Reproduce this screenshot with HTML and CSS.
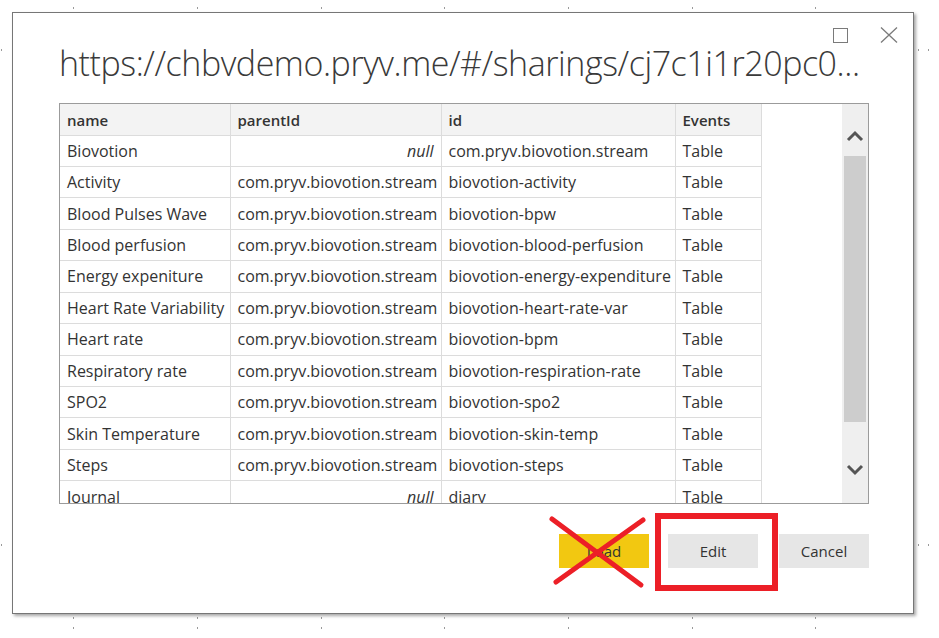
FILE: index.html
```html
<!DOCTYPE html>
<html>
<head>
<meta charset="utf-8">
<link rel="stylesheet" href="styles.css">
</head>
<body>
<div class="canvas">
  <span class="dot" style="left:73px;top:7px"></span>
  <span class="dot" style="left:197px;top:7px"></span>
  <span class="dot" style="left:321px;top:7px"></span>
  <span class="dot" style="left:444px;top:7px"></span>
  <span class="dot" style="left:568px;top:7px"></span>
  <span class="dot" style="left:692px;top:7px"></span>
  <span class="dot" style="left:815px;top:7px"></span>
  <span class="dot" style="left:73px;top:617px"></span>
  <span class="dot" style="left:197px;top:617px"></span>
  <span class="dot" style="left:321px;top:617px"></span>
  <span class="dot" style="left:444px;top:617px"></span>
  <span class="dot" style="left:568px;top:617px"></span>
  <span class="dot" style="left:692px;top:617px"></span>
  <span class="dot" style="left:815px;top:617px"></span>
  <span class="dot" style="left:73px;top:627px"></span>
  <span class="dot" style="left:197px;top:627px"></span>
  <span class="dot" style="left:321px;top:627px"></span>
  <span class="dot" style="left:444px;top:627px"></span>
  <span class="dot" style="left:568px;top:627px"></span>
  <span class="dot" style="left:692px;top:627px"></span>
  <span class="dot" style="left:815px;top:627px"></span>
  <span class="dot" style="left:1px;top:49px"></span>
  <span class="dot" style="left:1px;top:544px"></span>
  <span class="dot" style="left:918px;top:49px"></span>
  <span class="dot" style="left:928px;top:49px"></span>
  <span class="dot" style="left:918px;top:544px"></span>
  <span class="dot" style="left:928px;top:544px"></span>

  <div class="dialog">
    <div class="win-controls">
      <span class="maximize"></span>
      <svg class="close" width="18" height="16" viewBox="0 0 18 16"><path d="M1 0.5 L17 15.5 M17 0.5 L1 15.5" stroke="#7a7a7a" stroke-width="1.3" fill="none"/></svg>
    </div>
    <h1 class="title">https://chbvdemo.pryv.me/#/sharings/cj7c1i1r20pc0...</h1>
    <div class="grid-box">
      <div class="grid-view">
        <table class="grid">
          <colgroup>
            <col class="c-name"><col class="c-parent"><col class="c-id"><col class="c-events">
          </colgroup>
          <thead>
            <tr><th>name</th><th>parentId</th><th>id</th><th>Events</th></tr>
          </thead>
          <tbody>
            <tr><td>Biovotion</td><td class="null">null</td><td>com.pryv.biovotion.stream</td><td>Table</td></tr>
            <tr><td>Activity</td><td>com.pryv.biovotion.stream</td><td>biovotion-activity</td><td>Table</td></tr>
            <tr><td>Blood Pulses Wave</td><td>com.pryv.biovotion.stream</td><td>biovotion-bpw</td><td>Table</td></tr>
            <tr><td>Blood perfusion</td><td>com.pryv.biovotion.stream</td><td>biovotion-blood-perfusion</td><td>Table</td></tr>
            <tr><td>Energy expeniture</td><td>com.pryv.biovotion.stream</td><td>biovotion-energy-expenditure</td><td>Table</td></tr>
            <tr><td>Heart Rate Variability</td><td>com.pryv.biovotion.stream</td><td>biovotion-heart-rate-var</td><td>Table</td></tr>
            <tr><td>Heart rate</td><td>com.pryv.biovotion.stream</td><td>biovotion-bpm</td><td>Table</td></tr>
            <tr><td>Respiratory rate</td><td>com.pryv.biovotion.stream</td><td>biovotion-respiration-rate</td><td>Table</td></tr>
            <tr><td>SPO2</td><td>com.pryv.biovotion.stream</td><td>biovotion-spo2</td><td>Table</td></tr>
            <tr><td>Skin Temperature</td><td>com.pryv.biovotion.stream</td><td>biovotion-skin-temp</td><td>Table</td></tr>
            <tr><td>Steps</td><td>com.pryv.biovotion.stream</td><td>biovotion-steps</td><td>Table</td></tr>
            <tr><td>Journal</td><td class="null">null</td><td>diary</td><td>Table</td></tr>
          </tbody>
        </table>
      </div>
      <div class="scrollbar">
        <svg class="arrow" width="18" height="12" viewBox="0 0 18 12"><path d="M2 10 L9 3 L16 10" stroke="#555" stroke-width="3" fill="none"/></svg>
        <div class="thumb"></div>
        <svg class="arrow" width="18" height="12" viewBox="0 0 18 12"><path d="M2 2 L9 9 L16 2" stroke="#555" stroke-width="3" fill="none"/></svg>
      </div>
    </div>
    <div class="actions">
      <button class="btn btn-load">Load</button>
      <button class="btn btn-edit">Edit</button>
      <button class="btn btn-cancel">Cancel</button>
      <svg class="cross" width="100" height="74" viewBox="0 0 100 74"><path d="M4 4 L93 70 M95 5 L8 67" stroke="#ec1f27" stroke-width="5" stroke-linecap="round" fill="none"/></svg>
      <div class="highlight"></div>
    </div>
  </div>
</div>
</body>
</html>
```

FILE: styles.css
```css
* { box-sizing: border-box; }
html, body { margin: 0; padding: 0; background: #ffffff; }
body { font-family: "Open Sans", "Noto Sans", sans-serif; color: #333; }

.canvas {
  position: relative;
  width: 939px;
  height: 638px;
  padding: 12px 0 0 12px;
}

.dot {
  position: absolute;
  width: 1px;
  height: 2px;
  background: #9a9a9a;
}

.dialog {
  position: relative;
  width: 902px;
  height: 602px;
  border: 1px solid #767676;
  background: #fff;
  box-shadow: 2px 2px 3px rgba(0,0,0,0.35);
  padding: 0 44px 0 46px;
  display: flex;
  flex-direction: column;
}

.win-controls {
  position: absolute;
  top: 14px;
  right: 15px;
  display: flex;
  align-items: center;
  gap: 32px;
}
.maximize {
  width: 15px;
  height: 15px;
  border: 1.3px solid #7a7a7a;
}

.title {
  margin: 25px 0 0 0;
  height: 65px;
  font-size: 34px;
  line-height: 50px;
  font-weight: 300;
  letter-spacing: -0.45px;
  color: #3a3a3a;
  white-space: nowrap;
}

.grid-box {
  height: 401px;
  border: 1px solid #9b9b9b;
  display: flex;
}
.grid-view {
  flex: 1;
  overflow: hidden;
  background: #fff;
}
.grid {
  border-collapse: collapse;
  table-layout: fixed;
  width: 701px;
  font-size: 16px;
}
.c-name { width: 170px; }
.c-parent { width: 211px; }
.c-id { width: 234px; }
.c-events { width: 86px; }

.grid th, .grid td {
  height: 31.45px;
  padding: 0 7px;
  border-right: 1px solid #dcdcdc;
  border-bottom: 1px solid #dcdcdc;
  text-align: left;
  white-space: nowrap;
  overflow: hidden;
  color: #333;
}
.grid th {
  background: #f3f3f3;
  font-weight: 600;
  font-size: 15px;
  height: 31px;
  padding-top: 2px;
}
.grid td.null {
  text-align: right;
  font-style: italic;
}

.scrollbar {
  width: 26px;
  background: #efefef;
  display: flex;
  flex-direction: column;
  align-items: center;
  padding: 26px 0 0 0;
}
.scrollbar .arrow { flex: none; }
.thumb {
  width: 22px;
  height: 266px;
  background: #cdcdcd;
  margin: 14px 0 42px 0;
}

.actions {
  position: relative;
  margin-top: 30px;
  display: flex;
  justify-content: flex-end;
  gap: 19px;
}
.btn {
  width: 90px;
  height: 34px;
  border: none;
  font-family: "Open Sans", "Noto Sans", sans-serif;
  font-size: 15px;
  color: #333;
  padding: 0;
}
.btn-load { background: #f2c811; }
.btn-edit { background: #e6e6e6; }
.btn-cancel { background: #e6e6e6; margin-left: 2px; }

.cross {
  position: absolute;
  left: 489px;
  top: -19px;
}
.highlight {
  position: absolute;
  left: 596px;
  top: -21px;
  width: 123px;
  height: 78px;
  border: 6px solid #ec1f27;
}
```
